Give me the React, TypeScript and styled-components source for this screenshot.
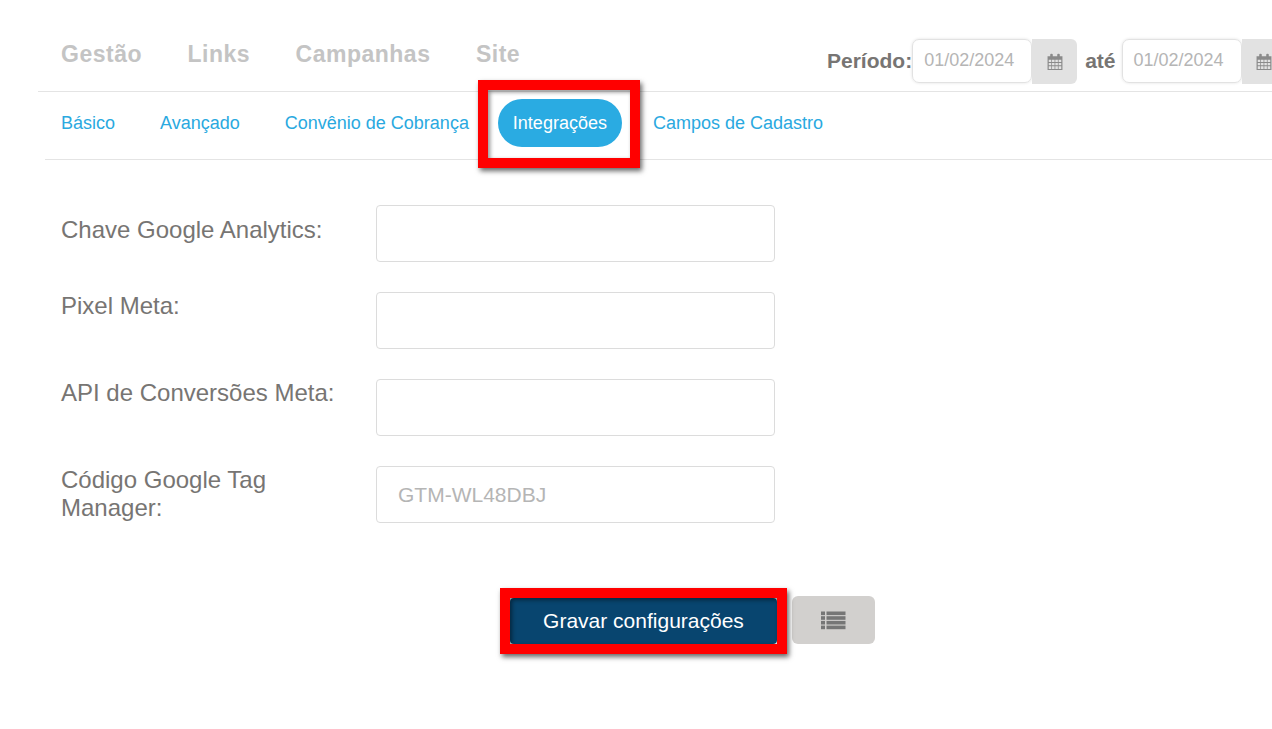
import React from 'react';
import styled, { createGlobalStyle } from 'styled-components';

const GlobalStyle = createGlobalStyle`
  html, body {
    margin: 0;
    padding: 0;
    background: #fff;
    overflow: hidden;
    font-family: "Liberation Sans", Arial, sans-serif;
  }
`;

const menuItems = ['Gestão', 'Links', 'Campanhas', 'Site'];
const tabs = ['Básico', 'Avançado', 'Convênio de Cobrança', 'Integrações', 'Campos de Cadastro'];
const fields = [
  { id: 1, label: 'Chave Google Analytics:', placeholder: '', offset: 11 },
  { id: 2, label: 'Pixel Meta:', placeholder: '', offset: 0 },
  { id: 3, label: 'API de Conversões Meta:', placeholder: '', offset: 0 },
  { id: 4, label: 'Código Google Tag Manager:', placeholder: 'GTM-WL48DBJ', offset: 0 },
];

const CalendarIcon = () => (
  <svg width="16" height="17" viewBox="0 0 15 16" fill="#8a8a8a">
    <path d="M0.5 3h14v13h-14zM1.6 6.4v2h2.4v-2zm3.1 0v2h2.4v-2zm3.1 0v2h2.4v-2zm3.1 0v2h2.5v-2zM1.6 9.3v2.2h2.4V9.3zm3.1 0v2.2h2.4V9.3zm3.1 0v2.2h2.4V9.3zm3.1 0v2.2h2.5V9.3zM1.6 12.4V15h2.4v-2.6zm3.1 0V15h2.4v-2.6zm3.1 0V15h2.4v-2.6zm3.1 0V15h2.5v-2.6z" fillRule="evenodd" />
    <rect x="3" y="0.6" width="2.4" height="4" rx="1.1" />
    <rect x="9.6" y="0.6" width="2.4" height="4" rx="1.1" />
  </svg>
);

const ListIcon = () => (
  <svg width="25" height="19" viewBox="0 0 25 19" fill="#767676">
    <rect x="0" y="0.5" width="4" height="3.6" />
    <rect x="5.5" y="0.5" width="19" height="3.6" />
    <rect x="0" y="5.2" width="4" height="3.6" />
    <rect x="5.5" y="5.2" width="19" height="3.6" />
    <rect x="0" y="9.9" width="4" height="3.6" />
    <rect x="5.5" y="9.9" width="19" height="3.6" />
    <rect x="0" y="14.6" width="4" height="3.6" />
    <rect x="5.5" y="14.6" width="19" height="3.6" />
  </svg>
);

const DateField = () => (
  <DateGroup>
    <DateInput>01/02/2024</DateInput>
    <DateAddon>
      <CalendarIcon />
    </DateAddon>
  </DateGroup>
);

export default function App() {
  return (
    <Page>
      <GlobalStyle />
      <TopBar>
        <Menu>
          {menuItems.map((item) => (
            <MenuItem key={item}>{item}</MenuItem>
          ))}
        </Menu>
        <Period>
          <PeriodLabel>Período:</PeriodLabel>
          <DateField />
          <Until>até</Until>
          <DateField />
        </Period>
      </TopBar>
      <TabBar>
        {tabs.map((tab) =>
          tab === 'Integrações' ? (
            <TabHighlight key={tab} $top={-19} $right={-18} $bottom={-21} $left={-20}>
              <ActiveTab>{tab}</ActiveTab>
            </TabHighlight>
          ) : (
            <Tab key={tab}>{tab}</Tab>
          )
        )}
      </TabBar>
      <Form>
        {fields.map((field) => (
          <Row key={field.id}>
            <Label $offset={field.offset}>{field.label}</Label>
            <Input>{field.placeholder}</Input>
          </Row>
        ))}
      </Form>
      <Actions>
        <Highlight $top={-10} $right={-10} $bottom={-10} $left={-10}>
          <SaveButton>Gravar configurações</SaveButton>
        </Highlight>
        <ListButton>
          <ListIcon />
        </ListButton>
      </Actions>
    </Page>
  );
}

const Page = styled.div`
  width: 1272px;
  height: 729px;
  overflow: hidden;
  background: #fff;
  padding-left: 38px;
  box-sizing: border-box;
`;

const TopBar = styled.div`
  display: flex;
  justify-content: space-between;
  width: 1300px;
  height: 92px;
  box-sizing: border-box;
  border-bottom: 1px solid #e4e4e4;
  padding: 39px 0 0 23px;
`;

const Menu = styled.div`
  display: flex;
  gap: 45.5px;
`;

const MenuItem = styled.div`
  font-size: 23px;
  font-weight: bold;
  line-height: 30px;
  letter-spacing: 0.5px;
  color: #c4c4c4;
`;

const Period = styled.div`
  display: flex;
  align-items: flex-start;
  width: 511px;
  flex: none;
`;

const PeriodLabel = styled.span`
  font-size: 21px;
  font-weight: bold;
  line-height: 44px;
  color: #777573;
`;

const Until = styled.span`
  font-size: 21px;
  font-weight: bold;
  line-height: 44px;
  color: #777573;
  margin: 0 6px 0 8px;
`;

const DateGroup = styled.div`
  display: flex;
  flex: none;
`;

const DateInput = styled.div`
  width: 120px;
  height: 44px;
  box-sizing: border-box;
  border: 1px solid #e2e2e2;
  border-radius: 7px;
  box-shadow: 0 0 3px rgba(0, 0, 0, 0.12);
  padding-left: 11px;
  font-size: 18px;
  line-height: 40px;
  color: #b5b5b5;
`;

const DateAddon = styled.div`
  width: 45px;
  height: 45px;
  background: #e2e2e2;
  border-radius: 0 6px 6px 0;
  display: flex;
  align-items: center;
  justify-content: center;
`;

const TabBar = styled.div`
  display: flex;
  align-items: center;
  margin-left: 7px;
  width: 1300px;
  height: 68px;
  box-sizing: border-box;
  border-bottom: 1px solid #e4e4e4;
  padding: 0 0 6px 16px;
  gap: 45px;
`;

const Tab = styled.div`
  font-size: 18px;
  line-height: 24px;
  color: #2aa9e0;
`;

const ActiveTab = styled.div`
  width: 124px;
  height: 48px;
  border-radius: 24px;
  background: #2aabe2;
  color: #fff;
  font-size: 18px;
  line-height: 48px;
  text-align: center;
`;

const Highlight = styled.div<{ $top: number; $right: number; $bottom: number; $left: number }>`
  position: relative;
  flex: none;

  &::after {
    content: '';
    position: absolute;
    top: ${(p) => p.$top}px;
    right: ${(p) => p.$right}px;
    bottom: ${(p) => p.$bottom}px;
    left: ${(p) => p.$left}px;
    border: 10px solid #ff0000;
    box-shadow: 2px 3px 5px rgba(0, 0, 0, 0.6), inset 2px 2px 4px rgba(0, 0, 0, 0.45);
    pointer-events: none;
  }
`;

const TabHighlight = styled(Highlight)`
  margin: 0 -14px 0 -16px;
`;

const Form = styled.div`
  display: flex;
  flex-direction: column;
  gap: 30px;
  padding: 45px 0 0 23px;
`;

const Row = styled.div`
  display: grid;
  grid-template-columns: 315px 399px;
`;

const Label = styled.div<{ $offset: number }>`
  font-size: 24px;
  line-height: 28px;
  padding-top: ${(p) => p.$offset}px;
  width: 290px;
  color: #777573;
`;

const Input = styled.div`
  height: 57px;
  box-sizing: border-box;
  border: 1px solid #dcdcdc;
  border-radius: 4px;
  padding-left: 21px;
  font-size: 21px;
  line-height: 55px;
  color: #b5b5b5;
`;

const Actions = styled.div`
  display: flex;
  align-items: flex-end;
  gap: 15px;
  margin: 73px 0 0 472px;
`;

const SaveButton = styled.div`
  width: 267px;
  height: 46px;
  background: #08456f;
  border-radius: 4px;
  color: #fff;
  font-size: 21px;
  line-height: 46px;
  text-align: center;
`;

const ListButton = styled.div`
  width: 83px;
  height: 48px;
  background: #d2d0ce;
  border-radius: 6px;
  display: flex;
  align-items: center;
  justify-content: center;
`;
